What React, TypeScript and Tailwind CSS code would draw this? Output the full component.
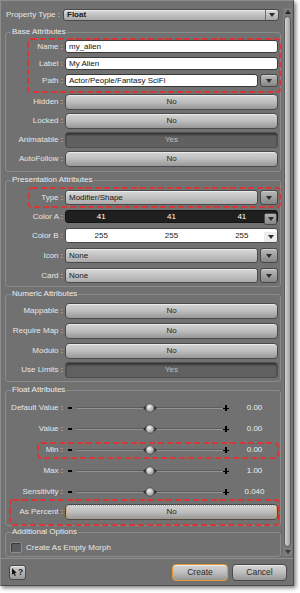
import React from "react";

function Down({ c = "#2b2b2b" }: { c?: string }) {
  return (
    <svg width="6" height="4" viewBox="0 0 6 4">
      <polygon points="0,0 6,0 3,4" fill={c} />
    </svg>
  );
}
function UpTri() {
  return (
    <svg width="6" height="4" viewBox="0 0 6 4">
      <polygon points="0,4 6,4 3,0" fill="#2b2b2b" />
    </svg>
  );
}

function Label({ children }: { children: React.ReactNode }) {
  return (
    <div className="w-[57px] shrink-0 text-right text-[8px] leading-[10px] text-[#e6e6e6] whitespace-nowrap">
      {children}
    </div>
  );
}

function ArrowBtn() {
  return (
    <div className="w-[18px] h-full shrink-0 rounded-[3px] border border-[#474747] bg-gradient-to-b from-[#bababa] to-[#868686] shadow-[inset_0_1px_0_rgba(255,255,255,0.35)] flex items-center justify-center">
      <Down />
    </div>
  );
}

function Row({ label, cls, children }: { label: string; cls: string; children: React.ReactNode }) {
  return (
    <div className={`flex items-center gap-[2px] pr-[2px] ${cls}`}>
      <Label>{label}</Label>
      {children}
    </div>
  );
}

function TextField({ value }: { value: string }) {
  return (
    <div className="flex-1 h-full rounded-[3px] border border-[#3a3a3a] bg-white pl-[3px] flex items-center text-[8px] text-[#111]">
      {value}
    </div>
  );
}

function DropField({ value }: { value: string }) {
  return (
    <div className="flex-1 h-full rounded-[3px] border border-[#4a4a4a] bg-gradient-to-b from-[#d9d9d9] to-[#ababab] shadow-[inset_0_1px_0_rgba(255,255,255,0.5)] pl-[3px] flex items-center text-[8px] text-[#1a1a1a]">
      {value}
    </div>
  );
}

function Toggle({ on }: { on?: boolean }) {
  if (on)
    return (
      <div className="flex-1 h-full rounded-[3px] border border-[#4e4e4e] bg-[#606060] shadow-[inset_0_2px_2px_rgba(0,0,0,0.45)] flex items-center justify-center text-[8px] text-[#bdbdbd]">
        Yes
      </div>
    );
  return (
    <div className="flex-1 h-full rounded-[4px] border border-[#4a4a4a] bg-gradient-to-b from-[#d4d4d4] via-[#bdbdbd] to-[#979797] shadow-[inset_0_1px_0_rgba(255,255,255,0.5)] flex items-center justify-center text-[8px] text-[#262626]">
      No
    </div>
  );
}

function Group({ title, cls, children }: { title: string; cls: string; children: React.ReactNode }) {
  return (
    <fieldset className={`border border-[#8b8b8b] rounded-[3px] ${cls}`}>
      <legend className="ml-[5px] px-[1px] text-[8px] leading-[10px] text-[#ededed]">{title}</legend>
      {children}
    </fieldset>
  );
}

function Knob() {
  return (
    <svg width="14" height="10" viewBox="0 0 14 10" className="absolute left-[66px] top-[2px]">
      <defs>
        <radialGradient id="kg" cx="0.4" cy="0.35" r="0.7">
          <stop offset="0" stopColor="#f4f4f4" />
          <stop offset="1" stopColor="#8a8a8a" />
        </radialGradient>
      </defs>
      <polygon points="0,5 3,2.5 3,7.5" fill="#2e2e2e" />
      <polygon points="14,5 11,2.5 11,7.5" fill="#2e2e2e" />
      <circle cx="7" cy="5" r="4.2" fill="url(#kg)" stroke="#4a4a4a" strokeWidth="0.8" />
    </svg>
  );
}

function SliderRow({ label, value, cls }: { label: string; value: string; cls: string }) {
  return (
    <div className={`flex items-center h-[14px] ${cls}`}>
      <Label>{label}</Label>
      <div className="w-[14px] shrink-0 flex justify-center">
        <div className="w-[4px] h-[1.5px] bg-black" />
      </div>
      <div className="relative w-[146px] h-full shrink-0">
        <div className="absolute left-0 right-0 top-[6px] h-[1px] bg-[#5c5c5c]" />
        <div className="absolute left-0 right-0 top-[7px] h-[1px] bg-[#939393]" />
        <Knob />
      </div>
      <div className="relative w-[6px] h-[6px] shrink-0">
        <div className="absolute left-0 right-0 top-[2.5px] h-[1.5px] bg-black" />
        <div className="absolute top-0 bottom-0 left-[2.25px] w-[1.5px] bg-black" />
      </div>
      <div className="flex-1 text-center text-[8px] leading-[10px] text-[#eeeeee]">{value}</div>
    </div>
  );
}

function Mark({ cls, w, h }: { cls: string; w: number; h: number }) {
  return (
    <svg className={`absolute pointer-events-none ${cls}`} width={w} height={h}>
      <rect
        x="1"
        y="1"
        width={w - 2}
        height={h - 2}
        rx="3"
        fill="none"
        stroke="#d63838"
        strokeWidth="2"
        strokeDasharray="6 3"
      />
    </svg>
  );
}

export default function App() {
  return (
    <div className="relative w-[300px] h-[593px] bg-white font-['Liberation_Sans',Arial,sans-serif] overflow-hidden">
      <div className="w-[294px] h-[586px] bg-[#717171] border-l border-t border-[#8e8e8e] border-r border-b border-r-[#4a4a4a] border-b-[#4a4a4a] shadow-[2px_2px_4px_rgba(0,0,0,0.5)] flex flex-col">
        <div className="h-[557px] flex pt-[7px]">
          <div className="w-[276px] ml-[4px] pt-[1px]">
            <div className="flex items-center h-[12px] gap-[3px] pr-[2px]">
              <div className="w-[55px] shrink-0 text-right text-[8px] leading-[10px] text-[#e6e6e6] whitespace-nowrap">
                Property Type :
              </div>
              <div className="flex-1 h-full rounded-[3px] border border-[#4a4a4a] bg-gradient-to-b from-[#dadada] to-[#a9a9a9] shadow-[inset_0_1px_0_rgba(255,255,255,0.5)] flex items-center">
                <div className="flex-1 pl-[3px] text-[8px] font-bold text-[#1a1a1a]">Float</div>
                <div className="w-[13px] h-full border-l border-[#6e6e6e] flex items-center justify-center">
                  <Down />
                </div>
              </div>
            </div>

            <Group title="Base Attributes" cls="mt-[6px]">
              <div className="flex flex-col pt-[3px] pb-[4px]">
                <Row label="Name :" cls="h-[13px]">
                  <TextField value="my_alien" />
                </Row>
                <Row label="Label :" cls="h-[13px] mt-[4px]">
                  <TextField value="My Alien" />
                </Row>
                <Row label="Path :" cls="h-[13px] mt-[4px]">
                  <TextField value="Actor/People/Fantasy SciFi" />
                  <ArrowBtn />
                </Row>
                <Row label="Hidden :" cls="h-[16px] mt-[7px]">
                  <Toggle />
                </Row>
                <Row label="Locked :" cls="h-[16px] mt-[3px]">
                  <Toggle />
                </Row>
                <Row label="Animatable :" cls="h-[16px] mt-[3px]">
                  <Toggle on />
                </Row>
                <Row label="AutoFollow :" cls="h-[16px] mt-[3px]">
                  <Toggle />
                </Row>
              </div>
            </Group>

            <Group title="Presentation Attributes" cls="mt-[3px]">
              <div className="flex flex-col pt-[5px] pb-[3px]">
                <Row label="Type :" cls="h-[15px]">
                  <DropField value="Modifier/Shape" />
                  <ArrowBtn />
                </Row>
                <Row label="Color A :" cls="h-[14px] mt-[5px]">
                  <div className="relative flex-1 h-full">
                    <div className="absolute inset-x-0 top-0 h-[13px] rounded-[3px] bg-[#1f1f1f] border border-[#141414] grid grid-cols-3 items-center text-center text-[8px] text-white">
                      <span>41</span>
                      <span>41</span>
                      <span>41</span>
                    </div>
                    <div className="absolute right-[1px] top-[3px] w-[13px] h-[12px] rounded-[2px] border border-[#4a4a4a] bg-gradient-to-b from-[#b4b4b4] to-[#858585] flex items-center justify-center">
                      <Down />
                    </div>
                  </div>
                </Row>
                <Row label="Color B :" cls="h-[15px] mt-[4px]">
                  <div className="relative flex-1 h-full rounded-[3px] bg-white border border-[#4a4a4a] grid grid-cols-3 items-center text-center text-[8px] text-[#1a1a1a]">
                    <span>255</span>
                    <span>255</span>
                    <span>255</span>
                    <div className="absolute right-0 bottom-0 w-[13px] h-[10px] rounded-br-[3px] bg-[#ececec] flex items-center justify-center">
                      <Down />
                    </div>
                  </div>
                </Row>
                <Row label="Icon :" cls="h-[15px] mt-[5px]">
                  <DropField value="None" />
                  <ArrowBtn />
                </Row>
                <Row label="Card :" cls="h-[15px] mt-[5px]">
                  <DropField value="None" />
                  <ArrowBtn />
                </Row>
              </div>
            </Group>

            <Group title="Numeric Attributes" cls="mt-[2px]">
              <div className="flex flex-col pt-[4px] pb-[3px]">
                <Row label="Mappable :" cls="h-[16px]">
                  <Toggle />
                </Row>
                <Row label="Require Map :" cls="h-[16px] mt-[4px]">
                  <Toggle />
                </Row>
                <Row label="Modulo :" cls="h-[16px] mt-[4px]">
                  <Toggle />
                </Row>
                <Row label="Use Limits :" cls="h-[16px] mt-[3px]">
                  <Toggle on />
                </Row>
              </div>
            </Group>

            <Group title="Float Attributes" cls="mt-[3px]">
              <div className="flex flex-col pt-[6px] pb-[5px]">
                <SliderRow label="Default Value :" value="0.00" cls="" />
                <SliderRow label="Value :" value="0.00" cls="mt-[7px]" />
                <SliderRow label="Min :" value="0.00" cls="mt-[7px]" />
                <SliderRow label="Max :" value="1.00" cls="mt-[7px]" />
                <SliderRow label="Sensitivity :" value="0.040" cls="mt-[7px]" />
                <Row label="As Percent :" cls="h-[16px] mt-[5px]">
                  <div className="relative flex-1 h-full">
                    <Toggle />
                    <div className="absolute inset-[1px] rounded-[3px] border border-dotted border-[#e49a30]" />
                  </div>
                </Row>
              </div>
            </Group>

            <Group title="Additional Options" cls="mt-[1px]">
              <div className="flex items-center h-[11px] mt-[5px] mb-[3px] pl-[4px] gap-[4px]">
                <div className="w-[12px] h-[11px] rounded-[2px] border border-[#8e8e8e] bg-[#5e5e5e] shadow-[inset_1px_1px_1px_rgba(0,0,0,0.4)]" />
                <span className="text-[8px] leading-[10px] text-[#e6e6e6]">Create As Empty Morph</span>
              </div>
            </Group>
          </div>

          <div className="ml-[2px] w-[9px] h-[548px] flex flex-col items-center bg-[#7c7c7c]">
            <div className="h-[8px] flex items-center justify-center">
              <UpTri />
            </div>
            <div className="w-[7px] flex-1 rounded-[4px] border border-[#5a5a5a] bg-gradient-to-r from-[#d2d2d2] to-[#a3a3a3]" />
            <div className="h-[9px] flex items-center justify-center">
              <Down c="#3a3a3a" />
            </div>
          </div>
        </div>

        <div className="flex-1 border-t border-[#8e8e8e] flex items-center pl-[8px] pr-[6px]">
          <div className="w-[17px] h-[15px] rounded-[3px] border border-[#4a4a4a] bg-gradient-to-b from-[#d2d2d2] to-[#999999] shadow-[inset_0_1px_0_rgba(255,255,255,0.5)] flex items-center justify-center gap-[1px]">
            <svg width="5" height="8" viewBox="0 0 5 8">
              <polygon points="0,0 0,7 1.6,5.4 2.8,8 3.8,7.5 2.7,5 4.8,5" fill="#111" />
            </svg>
            <span className="text-[9px] leading-[10px] font-bold text-[#222]">?</span>
          </div>
          <div className="flex-1" />
          <div className="w-[56px] h-[17px] rounded-[4px] border border-[#e39a34] bg-gradient-to-b from-[#d4d4d4] via-[#bdbdbd] to-[#979797] shadow-[inset_0_1px_0_rgba(255,255,255,0.5)] flex items-center justify-center text-[8.5px] text-[#2a2a2a]">
            Create
          </div>
          <div className="w-[55px] h-[17px] ml-[4px] rounded-[4px] border border-[#4a4a4a] bg-gradient-to-b from-[#d4d4d4] via-[#bdbdbd] to-[#979797] shadow-[inset_0_1px_0_rgba(255,255,255,0.5)] flex items-center justify-center text-[8.5px] text-[#2a2a2a]">
            Cancel
          </div>
        </div>
      </div>

      <Mark cls="left-[27px] top-[38px]" w={254} h={55} />
      <Mark cls="left-[28px] top-[187px]" w={253} h={21} />
      <Mark cls="left-[37px] top-[442px]" w={242} h={17} />
      <Mark cls="left-[9px] top-[499px]" w={271} h={27} />
    </div>
  );
}
